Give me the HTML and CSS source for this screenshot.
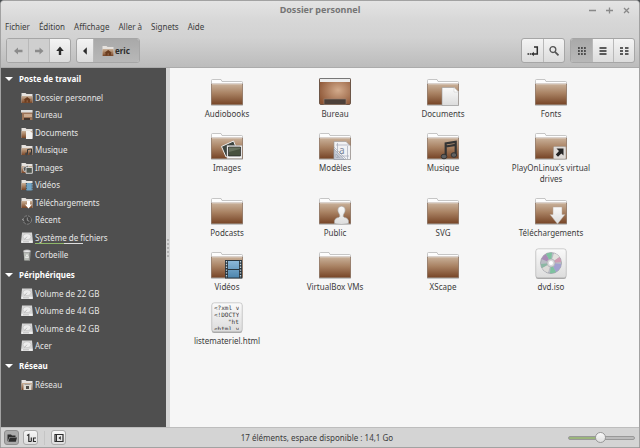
FILE: index.html
```html
<!DOCTYPE html>
<html lang="fr">
<head>
<meta charset="utf-8">
<meta name="viewport" content="width=device-width, initial-scale=1">
<title>Dossier personnel</title>
<link rel="stylesheet" href="styles.css">
</head>
<body>
<svg class="defs" width="0" height="0" aria-hidden="true">
  <defs>
    <linearGradient id="brown" x1="0" y1="0" x2="0" y2="1"><stop offset="0" stop-color="#c9b19a"/><stop offset=".45" stop-color="#a98263"/><stop offset="1" stop-color="#774527"/></linearGradient>
    <radialGradient id="desk" cx=".6" cy=".45" r=".7"><stop offset="0" stop-color="#d3ab8c"/><stop offset="1" stop-color="#8b5333"/></radialGradient>
    <linearGradient id="paper" x1="0" y1="0" x2="0" y2="1"><stop offset="0" stop-color="#fafafa"/><stop offset="1" stop-color="#dcdcdc"/></linearGradient>
    <linearGradient id="film" x1="0" y1="0" x2="0" y2="1"><stop offset="0" stop-color="#8cb8d8"/><stop offset="1" stop-color="#4d86ae"/></linearGradient>
    <symbol id="folder" viewBox="0 0 32 32">
      <path d="M.5 30V5.500Q.5 4.500 1.500 4.500H10L11 6.500H30.500Q31.500 6.500 31.500 7.500V30Z" fill="#fdfdfd" stroke="#b9b9b9" stroke-width=".8"/>
      <path d="M.5 9H31.500V29.500H.5Z" fill="url(#brown)" stroke="#7a5a45" stroke-opacity=".65" stroke-width=".8"/>
      <path d="M1 9.500H31" stroke="#e4d5c7" stroke-opacity=".6"/>
      <path d="M0 30.300H32" stroke="#777" stroke-opacity=".5" stroke-width=".6"/>
    </symbol>
    <symbol id="desktop" viewBox="0 0 32 32">
      <rect x=".5" y="3.500" width="31" height="26" rx="1.500" fill="url(#desk)" stroke="#6d5648"/>
      <path d="M1 4H31V7H1Z" fill="#ececec"/><path d="M.5 3.500H31.500" stroke="#777"/>
      <rect x="5" y="24" width="22" height="5.500" fill="#4d4039" stroke="#9b8373" stroke-width=".6"/>
    </symbol>
    <symbol id="file" viewBox="0 0 32 32">
      <rect x=".8" y="1" width="30.400" height="30" rx="2.500" fill="#a5a5a5"/>
      <rect x=".8" y=".8" width="30.400" height="29" rx="2.500" fill="url(#paper)" stroke="#bdbdbd" stroke-width=".7"/>
    </symbol>
    <symbol id="s-folder" viewBox="0 0 12 12">
      <path d="M.5 11V1H4.500L5.500 2H11.500V11Z" fill="#e6e2de"/><path d="M.5 4H11.500V11H.5Z" fill="url(#brown)"/>
    </symbol>
    <symbol id="s-home" viewBox="0 0 12 12">
      <use href="#s-folder"/><path d="M2.500 7.800 6.200 5 9.900 7.800H9V10.500H7V8.500H5.500V10.500H3.500V7.800Z" fill="#6b3d20"/>
    </symbol>
    <symbol id="s-drive" viewBox="0 0 12 12">
      <path d="M1 .5H11L11.800 8.500V11H.2V8.500Z" fill="#d6d6d6"/><path d="M.4 8.800H11.600V10.800H.4Z" fill="#efefef"/><ellipse cx="6" cy="4.700" rx="4" ry="3" fill="#ededed" stroke="#bdbdbd" stroke-width=".6"/><path d="M6 4.700 3.500 7.500M2 9.800H8" stroke="#aaa" stroke-width=".7"/>
    </symbol>
  </defs>
</svg>

<div class="window">
  <header class="chrome">
    <div class="titlebar">
      <h1 class="title">Dossier personnel</h1>
      <div class="window-buttons">
        <button type="button" aria-label="Réduire"><svg viewBox="0 0 7 7"><path d="M0 3.500H7"/></svg></button>
        <button type="button" aria-label="Agrandir"><svg viewBox="0 0 7 7"><path d="M0 3.500H7M3.500 .5V6.500"/></svg></button>
        <button type="button" aria-label="Fermer"><svg viewBox="0 0 7 7"><path d="M1 1 6 6M6 1 1 6"/></svg></button>
      </div>
    </div>
    <nav class="menubar">
      <button type="button">Fichier</button><button type="button">Édition</button><button type="button">Affichage</button><button type="button">Aller à</button><button type="button">Signets</button><button type="button">Aide</button>
    </nav>
    <div class="toolbar">
      <div class="group">
        <button type="button" aria-label="Précédent" disabled><svg class="icon" viewBox="0 0 12 12"><path d="M2 6 6 2.500V4.800H10.500V7.200H6V9.500Z" fill="currentColor"/></svg></button>
        <button type="button" aria-label="Suivant" disabled><svg class="icon" viewBox="0 0 12 12"><path d="M10.500 6 6.500 2.500V4.800H2V7.200H6.500V9.500Z" fill="currentColor"/></svg></button>
        <button type="button" aria-label="Parent"><svg class="icon" viewBox="0 0 12 12"><path d="M6 1.500 9.800 6H7.200V10H4.800V6H2.200Z" fill="currentColor"/></svg></button>
      </div>
      <div class="group path">
        <button type="button" class="back" aria-label="Défiler"><svg class="icon" viewBox="0 0 12 12"><path d="M4 6 7.800 2.200V9.800Z" fill="currentColor"/></svg></button>
        <button type="button" class="crumb active"><svg class="icon"><use href="#s-home"/></svg>eric</button>
      </div>
      <div class="group push">
        <button type="button" aria-label="Emplacement"><svg class="icon" viewBox="0 0 12 12"><path d="M7 2H10.300V9H6" fill="none" stroke="currentColor" stroke-width="1.500"/><path d="M4.300 9 6.800 6.800V11.200ZM.5 8.200H2.100V9.800H.5ZM2.800 8.200H4.300V9.800H2.800Z" fill="currentColor"/></svg></button>
        <button type="button" aria-label="Rechercher"><svg class="icon" viewBox="0 0 12 12"><circle cx="4.900" cy="4.600" r="2.900" fill="none" stroke="#555" stroke-width="1.300"/><path d="M7 6.800 10.500 10.300" stroke="#555" stroke-width="1.800"/></svg></button>
      </div>
      <div class="group">
        <button type="button" class="active" aria-label="Icônes"><svg class="icon" viewBox="0 0 12 12"><path d="M2 3H10M2 6H10M2 9H10" stroke="currentColor" stroke-width="1.700" stroke-dasharray="1.800 1.200"/></svg></button>
        <button type="button" aria-label="Liste"><svg class="icon" viewBox="0 0 12 12"><path d="M2.500 3H9.500M2.500 6H9.500M2.500 9H9.500" stroke="currentColor" stroke-width="1.700"/></svg></button>
        <button type="button" aria-label="Liste compacte"><svg class="icon" viewBox="0 0 12 12"><path d="M2 3H5M7 3H10.500M2 6H5M7 6H10.500M2 9H5M7 9H10.500" stroke="currentColor" stroke-width="1.500"/></svg></button>
      </div>
    </div>
  </header>

  <main class="body">
    <aside class="sidebar">
      <h2>Poste de travail</h2>
      <ul>
        <li><svg class="icon"><use href="#s-home"/></svg><a href="#">Dossier personnel</a></li>
        <li><svg class="icon" viewBox="0 0 12 12"><path d="M0 1H11.500V11H1V4H0Z" fill="#9b7358"/><path d="M0 1H11.500V3.500H0Z" fill="#ddd"/><path d="M3 5H11V8H3Z" fill="#c9a98f"/><path d="M3 9H9V11H3Z" fill="#44362e"/></svg><a href="#">Bureau</a></li>
        <li><svg class="icon" viewBox="0 0 12 12"><use href="#s-folder"/><path d="M5 4H9L11.500 6V12H5Z" fill="#f2f2f2"/></svg><a href="#">Documents</a></li>
        <li><svg class="icon" viewBox="0 0 12 12"><use href="#s-folder"/><path d="M6.500 10V5.500L10.500 5V9.500" fill="none" stroke="#333"/><circle cx="5.500" cy="10" r="1.400" fill="#444"/><circle cx="9.700" cy="9.700" r="1.400" fill="#444"/></svg><a href="#">Musique</a></li>
        <li><svg class="icon" viewBox="0 0 12 12"><use href="#s-folder"/><path d="M2 5.500 7 3.500 8 8 3 9.500Z" fill="#555" stroke="#ddd" stroke-width=".7"/><path d="M5 5.500H11.300V11.300H5Z" fill="#505850" stroke="#eee" stroke-width=".8"/></svg><a href="#">Images</a></li>
        <li><svg class="icon" viewBox="0 0 12 12"><use href="#s-folder"/><path d="M5 4H11.500V11.500H5Z" fill="#71a4c5"/><path d="M5.300 4V11.500M11.200 4V11.500" stroke="#38444c" stroke-dasharray="1 .7"/></svg><a href="#">Vidéos</a></li>
        <li><svg class="icon" viewBox="0 0 12 12"><use href="#s-folder"/><path d="M6 4H9V7.500H11L7.500 11.500 4 7.500H6Z" fill="#fff"/></svg><a href="#">Téléchargements</a></li>
        <li><svg class="icon" viewBox="0 0 12 12"><circle cx="6.300" cy="6" r="4.200" fill="#454545" stroke="#858585" stroke-dasharray="3 1"/><path d="M6.300 3.500V6.300L8.300 7.300M1 5 3.300 7" fill="none" stroke="#aaa" stroke-width=".8"/></svg><a href="#">Récent</a></li>
        <li><svg class="icon"><use href="#s-drive"/></svg><a href="#" class="usage">Système de fichiers</a></li>
        <li><svg class="icon" viewBox="0 0 12 12"><path d="M2.500 2H9.500L9 11.500H3.300Z" fill="#b9bdb7"/><ellipse cx="6" cy="2.200" rx="3.600" ry="1.400" fill="#e8e8e8" stroke="#888" stroke-width=".6"/><path d="M6 5.500 7.600 8.500H4.500Z" fill="none" stroke="#f3f3f3" stroke-width=".8"/><path d="M8.700 3.500 8.300 11" stroke="#777" stroke-width=".7"/></svg><a href="#">Corbeille</a></li>
      </ul>
      <h2>Périphériques</h2>
      <ul>
        <li><svg class="icon"><use href="#s-drive"/></svg><a href="#">Volume de 22 GB</a></li>
        <li><svg class="icon"><use href="#s-drive"/></svg><a href="#">Volume de 44 GB</a></li>
        <li><svg class="icon"><use href="#s-drive"/></svg><a href="#">Volume de 42 GB</a></li>
        <li><svg class="icon"><use href="#s-drive"/></svg><a href="#">Acer</a></li>
      </ul>
      <h2>Réseau</h2>
      <ul>
        <li><svg class="icon" viewBox="0 0 12 12"><use href="#s-folder"/><path d="M2.500 5H10.500V11H2.500Z" fill="#dedbd3"/><path d="M5 7H8V10H5Z" fill="#4e4a44"/><path d="M3.500 5.500H9.500" stroke="#888" stroke-width=".7"/></svg><a href="#">Réseau</a></li>
      </ul>
    </aside>
    <div class="splitter" role="separator"><span class="grip"></span></div>
    <section class="files">
      <a class="item" href="#"><svg><use href="#folder"/></svg><span>Audiobooks</span></a>
      <a class="item" href="#"><svg><use href="#desktop"/></svg><span>Bureau</span></a>
      <a class="item" href="#"><svg viewBox="0 0 32 32"><use href="#folder"/><path d="M15 12.500H27L31.500 17V30.500H15Z" fill="url(#paper)" stroke="#999" stroke-width=".6"/><path d="M27 12.500V17H31.500Z" fill="#fff" stroke="#c5c5c5" stroke-width=".5"/></svg><span>Documents</span></a>
      <a class="item" href="#"><svg><use href="#folder"/></svg><span>Fonts</span></a>

      <a class="item" href="#"><svg viewBox="0 0 32 32"><use href="#folder"/><path d="M10.500 17.500 22.500 12 27 23 15 28Z" fill="#3e4540" stroke="#eee"/><path d="M16 16.500H31V29.500H16Z" fill="#f7f7f7" stroke="#aaa" stroke-width=".5"/><path d="M17.500 18H29.500V27H17.500Z" fill="#48523f" stroke="#222" stroke-width=".7"/><path d="M18 23 29 20V18.500H18Z" fill="#68715e"/></svg><span>Images</span></a>
      <a class="item" href="#"><svg viewBox="0 0 32 32"><use href="#folder"/><path d="M15 12.500H27L31.500 17V30.500H15Z" fill="#f1f2f4" stroke="#999" stroke-width=".6"/><path d="M17 16H30M17 27H30M18.500 14V30M28.500 17V30M15 18 27 30" stroke="#a4abb8" stroke-width=".7"/><path d="M15 20 25.500 30.500H15ZM17 25V28.500H20.500Z" fill="#c5cad4" fill-rule="evenodd" stroke="#8992a3" stroke-width=".5"/><text x="20" y="25" class="glyph-a">a</text></svg><span>Modèles</span></a>
      <a class="item" href="#"><svg viewBox="0 0 32 32"><use href="#folder"/><path d="M18.700 27V14.500L28.700 12.800V25.500M18.700 17.500 28.700 15.800" fill="none" stroke="#343434" stroke-width="2.200"/><ellipse cx="17" cy="27.500" rx="2.800" ry="2.300" fill="#606060" stroke="#343434"/><ellipse cx="26.900" cy="26" rx="2.800" ry="2.300" fill="#606060" stroke="#343434"/></svg><span>Musique</span></a>
      <a class="item" href="#"><svg viewBox="0 0 32 32"><use href="#folder"/><rect x="18.500" y="17.500" width="12.500" height="12.500" rx="1" fill="#dedad7" stroke="#a39a92" stroke-width=".6"/><path d="M21.500 19.500H28.500V26.500L26.300 24.400 23 27.700 20.800 25.500 24 22Z" fill="#252525"/></svg><span>PlayOnLinux's virtual drives</span></a>

      <a class="item" href="#"><svg><use href="#folder"/></svg><span>Podcasts</span></a>
      <a class="item" href="#"><svg viewBox="0 0 32 32"><use href="#folder"/><path d="M15.500 29.500Q14.500 24 20 23.300Q21.500 22.500 20.500 20.500Q18 17 19.200 14Q22.500 10.500 25.800 14Q27 17 24.500 20.500Q23.500 22.500 25 23.300Q30.500 24 29.500 29.500Q22.500 31.500 15.500 29.500Z" fill="url(#paper)" stroke="#aaa" stroke-width=".6"/></svg><span>Public</span></a>
      <a class="item" href="#"><svg><use href="#folder"/></svg><span>SVG</span></a>
      <a class="item" href="#"><svg viewBox="0 0 32 32"><use href="#folder"/><path d="M18 13H27V20.500H30L22.500 30 15 20.500H18Z" fill="url(#paper)" stroke="#b5a598" stroke-width=".5"/></svg><span>Téléchargements</span></a>

      <a class="item" href="#"><svg viewBox="0 0 32 32"><use href="#folder"/><path d="M14 12H31V30.500H14Z" fill="#29353d"/><path d="M17 13H28V21H17ZM17 22H28V29.500H17Z" fill="url(#film)"/><path d="M15.500 13V30M29.500 13V30" stroke="#c3d3dd" stroke-width="1.300" stroke-dasharray="1.400 1.400"/></svg><span>Vidéos</span></a>
      <a class="item" href="#"><svg><use href="#folder"/></svg><span>VirtualBox VMs</span></a>
      <a class="item" href="#"><svg><use href="#folder"/></svg><span>XScape</span></a>
      <a class="item" href="#"><svg viewBox="0 0 32 32"><use href="#file"/><circle cx="16" cy="15" r="10.500" fill="#b9bcc4" stroke="#8d8f99" stroke-width=".6"/><path d="M16 15 6.500 11A10.300 10.300 0 0 1 11 6Z" fill="#a98cb5"/><path d="M16 15 11 6A10.300 10.300 0 0 1 17 4.700Z" fill="#7fc2a0"/><path d="M16 15 19 5.200A10.300 10.300 0 0 1 24.500 9Z" fill="#e4e2de"/><path d="M16 15 24.500 9A10.300 10.300 0 0 1 26.200 14Z" fill="#cf9bb3"/><path d="M16 15 26.200 16A10.300 10.300 0 0 1 21 24Z" fill="#a2a1d0"/><path d="M16 15 21 24A10.300 10.300 0 0 1 15 25.200Z" fill="#7fc2a0"/><path d="M16 15 13 24.800A10.300 10.300 0 0 1 7 20Z" fill="#dddbd8"/><path d="M16 15 7 20A10.300 10.300 0 0 1 5.800 16Z" fill="#8cb7a4"/><circle cx="16" cy="15" r="4" fill="#d8d8da" stroke="#a7a7ad" stroke-width=".6"/><circle cx="16" cy="15" r="2" fill="#fff"/></svg><span>dvd.iso</span></a>

      <a class="item" href="#"><svg viewBox="0 0 32 32"><use href="#file"/><svg x="3" y="2" width="25" height="26" viewBox="0 0 25 26"><g class="code"><text x="0" y="6">&lt;?xml v</text><text x="0" y="13">&lt;!DOCTYP</text><text x="14" y="20">"ht</text><text x="0" y="27">&lt;html v</text></g></svg></svg><span>listemateriel.html</span></a>
    </section>
  </main>

  <footer class="statusbar">
    <button type="button" class="active" aria-label="Emplacements"><svg class="icon" viewBox="0 0 12 12"><path d="M1.500 9.800V2.500H5L6 3.500H9.500V5H3.500Z" fill="currentColor"/><path d="M3.800 5.500H11L9.800 9.800H2.300Z" fill="currentColor"/></svg></button>
    <button type="button" aria-label="Arborescence"><svg class="icon" viewBox="0 0 12 12"><path d="M2 3.500 3.800 2.500V9.500H6.300M6.300 5.500V9.500M11 6H8.500V9.500H11" fill="none" stroke="currentColor" stroke-width="1.200"/></svg></button>
    <span class="divider"></span>
    <button type="button" aria-label="Masquer le panneau"><svg class="icon" viewBox="0 0 12 12"><path d="M2 2.500H10V9.500H2Z" fill="none" stroke="currentColor" stroke-width="1.200"/><path d="M3 3H4V9H3ZM5.500 6 7.800 4V8Z" fill="currentColor"/></svg></button>
    <p class="status">17 éléments, espace disponible : 14,1 Go</p>
    <input class="zoom" type="range" min="0" max="100" value="49" aria-label="Niveau de zoom">
  </footer>
</div>
</body>
</html>
```
FILE: styles.css
```css
* { box-sizing: border-box; }

body {
  margin: 0;
  background: #4a4f52;
  color: #3c3c3c;
  font: 8px/12px "Noto Sans", "Open Sans", sans-serif;
}

button, input { font: inherit; color: inherit; margin: 0; }
button { padding: 0; border: 0; background: none; }
a { color: inherit; text-decoration: none; }
h1, h2, p, ul { margin: 0; padding: 0; }
ul { list-style: none; }
.defs { position: absolute; }
.icon { display: block; flex: none; width: 12px; height: 12px; }

.window {
  display: flex;
  flex-direction: column;
  min-height: 100vh;
  border: 1px solid #a2a2a2;
  border-radius: 4px 4px 0 0;
  background: #d6d6d6;
  overflow: hidden;
}

/* Title bar, menus and toolbar share one gradient */
.chrome {
  background: linear-gradient(#e4e4e4, #d7d7d7 30%, #d2d2d2 55%, #bcbcbc);
  border-bottom: 1px solid #ababab;
  padding-bottom: 4px;
}
.titlebar {
  display: grid;
  grid-template-columns: 1fr auto 1fr;
  align-items: center;
  height: 18px;
}
.title { grid-column: 2; font-size: 9px; font-weight: 700; line-height: 14px; color: #757575; }
.window-buttons { display: flex; justify-content: flex-end; gap: 10px; padding-right: 9px; }
.window-buttons svg { display: block; width: 7px; height: 7px; fill: none; stroke: #898989; stroke-width: 1.300; }

.menubar { display: flex; align-items: flex-start; gap: 9px; padding: 2px 4px; height: 19px; }

.toolbar { display: flex; gap: 5px; padding: 0 4px 0 5px; }
.group {
  display: flex;
  height: 25px;
  border: 1px solid #a6a6a6;
  border-radius: 3px;
  background: linear-gradient(#f4f4f4, #dcdcdc);
  overflow: hidden;
}
.push { margin-left: auto; }
.group button {
  display: flex;
  align-items: center;
  justify-content: center;
  width: 21px;
  color: #2c2c2c;
}
.group button + button { border-left: 1px solid #b9b9b9; }
.group button:disabled { background: #cfcfcf; color: #8c8c8c; }
.group .active { background: linear-gradient(#a9a9a9, #b8b8b8); }
.group .back { width: 16px; }
.group .crumb { width: auto; padding: 0 9px 0 8px; gap: 1px; font-weight: 700; }

.body { flex: 1; display: flex; }

.sidebar {
  width: 165px;
  background: #4f4f4f;
  color: #e6e6e6;
}
.sidebar h2 {
  display: flex;
  align-items: center;
  gap: 6px;
  height: 21px;
  padding-left: 4px;
  font-size: 8px;
  font-weight: 700;
  color: #fff;
}
.sidebar h2::before {
  content: "";
  border: 4px solid transparent;
  border-top-color: #fff;
  border-bottom: 0;
}
.sidebar li {
  display: flex;
  align-items: center;
  gap: 2px;
  height: 17px;
  padding-left: 20px;
}
.sidebar li:nth-child(even) { height: 18px; }
.usage {
  background: linear-gradient(90deg, #8fb86a 60%, #dedede 60%) left bottom / 48px 1px no-repeat;
}

.splitter {
  display: flex;
  align-items: center;
  justify-content: center;
  width: 4px;
  background: #d6d6d6;
}
.grip {
  width: 2px;
  height: 18px;
  background: repeating-linear-gradient(#b2b2b2 0 2px, transparent 2px 4px);
}

.files {
  flex: 1;
  display: grid;
  grid-template-columns: repeat(auto-fill, 108px);
  align-content: start;
  row-gap: 10px;
  padding: 7px 3px;
  background: #f6f6f6;
}
.item {
  display: flex;
  flex-direction: column;
  align-items: center;
  gap: 1px;
  line-height: 11px;
  text-align: center;
}
.item > svg { display: block; width: 32px; height: 32px; }
.item span { max-width: 92px; }
.glyph-a { font: 10px "Noto Sans", sans-serif; fill: #7c869a; }
.code { font: 6px "DejaVu Sans Mono", monospace; fill: #333; }

.statusbar {
  display: flex;
  align-items: center;
  gap: 4px;
  height: 20px;
  padding: 0 4px 0 3px;
  border-top: 1px solid #bdbdbd;
  background: #d4d4d4;
}
.statusbar button {
  display: grid;
  place-items: center;
  width: 15px;
  height: 15px;
  border: 1px solid #ababab;
  border-radius: 3px;
  background: linear-gradient(#f6f6f6, #dedede);
  color: #2c2c2c;
}
.statusbar .active { background: #ababab; border-color: #8e8e8e; }
.divider { width: 1px; height: 14px; margin: 0 2px; background: #c5c5c5; }
.status { flex: 1; text-align: center; }

.zoom { appearance: none; width: 67px; height: 12px; background: none; }
.zoom::-webkit-slider-runnable-track {
  height: 4px;
  border: 1px solid #999;
  border-radius: 2px;
  background: linear-gradient(90deg, #9bb57c 50%, #bcbcbc 50%);
}
.zoom::-webkit-slider-thumb {
  appearance: none;
  width: 11px;
  height: 11px;
  margin-top: -5px;
  border: 1px solid #999;
  border-radius: 50%;
  background: linear-gradient(#fafafa, #dedede);
}
```
